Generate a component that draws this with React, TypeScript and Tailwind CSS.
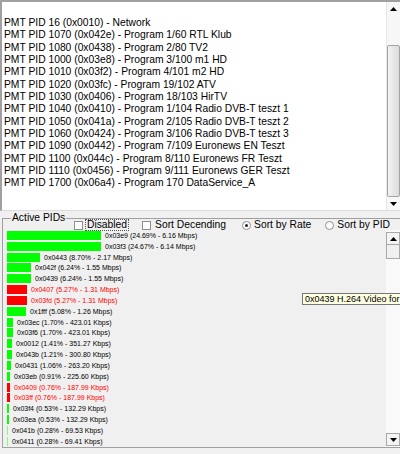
import React from "react";

const listItems = [
  "PMT PID 16 (0x0010) - Network",
  "PMT PID 1070 (0x042e) - Program 1/60 RTL Klub",
  "PMT PID 1080 (0x0438) - Program 2/80 TV2",
  "PMT PID 1000 (0x03e8) - Program 3/100 m1 HD",
  "PMT PID 1010 (0x03f2) - Program 4/101 m2 HD",
  "PMT PID 1020 (0x03fc) - Program 19/102 ATV",
  "PMT PID 1030 (0x0406) - Program 18/103 HirTV",
  "PMT PID 1040 (0x0410) - Program 1/104 Radio DVB-T teszt 1",
  "PMT PID 1050 (0x041a) - Program 2/105 Radio DVB-T teszt 2",
  "PMT PID 1060 (0x0424) - Program 3/106 Radio DVB-T teszt 3",
  "PMT PID 1090 (0x0442) - Program 7/109 Euronews EN Teszt",
  "PMT PID 1100 (0x044c) - Program 8/110 Euronews FR Teszt",
  "PMT PID 1110 (0x0456) - Program 9/111 Euronews GER Teszt",
  "PMT PID 1700 (0x06a4) - Program 170 DataService_A",
];

type Pid = { label: string; w: number; red?: boolean };
const pids: Pid[] = [
  { label: "0x03e9 (24.69% - 6.16 Mbps)", w: 94 },
  { label: "0x03f3 (24.67% - 6.14 Mbps)", w: 94 },
  { label: "0x0443 (8.70% - 2.17 Mbps)", w: 33 },
  { label: "0x042f (6.24% - 1.55 Mbps)", w: 24 },
  { label: "0x0439 (6.24% - 1.55 Mbps)", w: 24 },
  { label: "0x0407 (5.27% - 1.31 Mbps)", w: 20, red: true },
  { label: "0x03fd (5.27% - 1.31 Mbps)", w: 20, red: true },
  { label: "0x1fff (5.08% - 1.26 Mbps)", w: 19 },
  { label: "0x03ec (1.70% - 423.01 Kbps)", w: 6 },
  { label: "0x03f6 (1.70% - 423.01 Kbps)", w: 6 },
  { label: "0x0012 (1.41% - 351.27 Kbps)", w: 5 },
  { label: "0x043b (1.21% - 300.80 Kbps)", w: 5 },
  { label: "0x0431 (1.06% - 263.20 Kbps)", w: 4 },
  { label: "0x03eb (0.91% - 225.60 Kbps)", w: 3 },
  { label: "0x0409 (0.76% - 187.99 Kbps)", w: 3, red: true },
  { label: "0x03ff (0.76% - 187.99 Kbps)", w: 3, red: true },
  { label: "0x03f4 (0.53% - 132.29 Kbps)", w: 2 },
  { label: "0x03ea (0.53% - 132.29 Kbps)", w: 2 },
  { label: "0x041b (0.28% - 69.53 Kbps)", w: 1 },
  { label: "0x0411 (0.28% - 69.41 Kbps)", w: 1 },
];

function UpGlyph() {
  return (
    <svg width="7" height="4" viewBox="0 0 7 4">
      <polygon points="0,4 7,4 3.5,0" fill="#000" />
    </svg>
  );
}
function DownGlyph() {
  return (
    <svg width="7" height="4" viewBox="0 0 7 4">
      <polygon points="0,0 7,0 3.5,4" fill="#000" />
    </svg>
  );
}

function Checkbox({ label, focus }: { label: string; focus?: boolean }) {
  return (
    <div className="flex items-end">
      <div className="w-[9px] h-[9px] border border-[#8e8f8f] bg-white" />
      <span
        className={
          "ml-[3px] px-[1px] leading-[10px] " +
          (focus ? "outline outline-1 outline-dotted outline-[#555]" : "")
        }
      >
        {label}
      </span>
    </div>
  );
}

function Radio({ label, checked }: { label: string; checked?: boolean }) {
  return (
    <div className="flex items-end">
      <div className="w-[9px] h-[9px] rounded-full border border-[#8e8f8f] bg-white flex items-center justify-center">
        {checked && <div className="w-[3px] h-[3px] rounded-full bg-[#222]" />}
      </div>
      <span className="ml-[3px] leading-[10px]">{label}</span>
    </div>
  );
}

export default function App() {
  return (
    <div
      className="relative w-[400px] h-[454px] overflow-hidden bg-[#f0f0f0] text-black"
      style={{ fontFamily: '"Liberation Sans", Arial, sans-serif' }}
    >
      {/* Top listbox */}
      <div className="flex h-[211px] bg-white border-t-2 border-l-2 border-[#a0a0a0] border-b border-b-[#dcdcdc]">
        <div className="flex-1 pt-[15px] pl-[2px] text-[10.3px] leading-[12.33px] whitespace-nowrap overflow-hidden">
          {listItems.map((t) => (
            <div key={t}>{t}</div>
          ))}
        </div>
        <div className="w-[14px] flex flex-col bg-[#f7f7f7] border-l border-[#e6e6e6]">
          <div className="h-[13px] flex items-center justify-center">
            <UpGlyph />
          </div>
          <div className="h-[30px]" />
          <div className="h-[152px] border border-[#a3a3a3] rounded-[2px] bg-gradient-to-r from-[#f2f2f2] to-[#dcdcdc]" />
          <div className="flex-1 flex items-center justify-center">
            <DownGlyph />
          </div>
        </div>
      </div>

      {/* Group box */}
      <div className="relative mt-[7px] ml-[2px] h-[230px] border-t border-l border-b border-[#a0a0a0] flex flex-col">
        <div className="absolute left-[8px] top-[-7px] px-[1px] bg-[#f0f0f0] text-[10.3px] leading-[12px]">
          Active PIDs
        </div>
        <div className="h-[11px] flex items-end text-[10.3px]">
          <div className="ml-[71px]">
            <Checkbox label="Disabled" focus />
          </div>
          <div className="ml-[14px]">
            <Checkbox label="Sort Decending" />
          </div>
          <div className="ml-[15px]">
            <Radio label="Sort by Rate" checked />
          </div>
          <div className="ml-[14px]">
            <Radio label="Sort by PID" />
          </div>
        </div>
        <div className="flex flex-1">
          <div className="flex-1 pl-[4px] flex flex-col">
            {pids.map((p) => (
              <div key={p.label} className="h-[10.83px] flex items-center">
                <div
                  className={
                    p.red
                      ? "h-[9px] bg-[#ff0000]"
                      : p.w <= 1
                      ? "h-[9px] bg-[#7dff7d]"
                      : "h-[9px] bg-[#00ff00]"
                  }
                  style={{ width: p.w }}
                />
                <span
                  className={
                    "ml-[4px] text-[7px] leading-[9px] whitespace-nowrap " +
                    (p.red ? "text-[#ff0000]" : "text-black")
                  }
                >
                  {p.label}
                </span>
              </div>
            ))}
          </div>
          <div className="w-[14px] flex flex-col bg-[#f9f9f9] pt-[2px] pb-[1px]">
            <div className="h-[13px] border border-[#a9a9a9] bg-[#f4f4f4] flex items-center justify-center">
              <UpGlyph />
            </div>
            <div className="h-[14px] border border-t-0 border-[#a9a9a9] bg-[#f0f0f0]" />
            <div className="flex-1" />
            <div className="h-[13px] border border-[#a9a9a9] bg-[#f4f4f4] flex items-center justify-center">
              <DownGlyph />
            </div>
          </div>
        </div>
      </div>

      {/* Tooltip */}
      <div className="absolute left-[302px] top-[293px] h-[12px] w-[110px] border border-[#767676] bg-[#ffffe1] pl-[2px] text-[9px] leading-[10px] whitespace-nowrap">
        0x0439 H.264 Video for
      </div>
    </div>
  );
}
